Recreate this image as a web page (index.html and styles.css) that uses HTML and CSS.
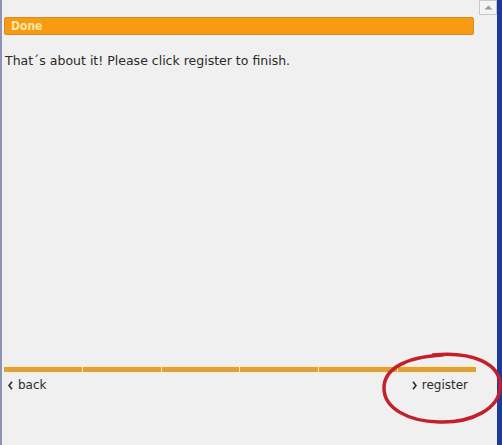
FILE: index.html
```html
<!DOCTYPE html>
<html>
<head>
<meta name="viewport" content="width=device-width, initial-scale=1">
<link rel="stylesheet" href="styles.css">
</head>
<body>
<div class="window">
  <div class="frame-left"></div>
  <div class="panel">
    <div class="step-title">Done</div>
    <p class="step-text">That´s about it! Please click register to finish.</p>
    <div class="progress">
      <span class="seg"></span>
      <span class="seg"></span>
      <span class="seg"></span>
      <span class="seg"></span>
      <span class="seg"></span>
      <span class="seg"></span>
    </div>
    <div class="nav">
      <a class="nav-link" href="#">
        <svg class="chev" width="5" height="9" viewBox="0 0 5 9"><path d="M4 0.8 L1 4.5 L4 8.2" fill="none" stroke="#2a2a2a" stroke-width="1.6"/></svg>back</a>
      <a class="nav-link" href="#">
        <svg class="chev" width="5" height="9" viewBox="0 0 5 9"><path d="M1 0.8 L4 4.5 L1 8.2" fill="none" stroke="#2a2a2a" stroke-width="1.6"/></svg>register</a>
    </div>
  </div>
  <div class="scrollbar">
    <div class="scroll-btn">
      <svg width="9" height="5" viewBox="0 0 9 5"><path d="M0.5 4.5 L4.5 0.5 L8.5 4.5 Z" fill="#9a9a9a"/></svg>
    </div>
  </div>
  <div class="frame-right"></div>
  <svg class="circle-mark" width="124" height="76" viewBox="0 0 124 76">
    <path d="M52 4 C92 0 119 13 119 34 C120 58 90 72 58 71 C26 70 3 57 3 37 C3 18 24 6 62 4" fill="none" stroke="#c4202c" stroke-width="3.5" stroke-linecap="round"/>
  </svg>
</div>
</body>
</html>
```

FILE: styles.css
```css
html, body {
  margin: 0;
  padding: 0;
  background: #f0f0f0;
}
.window {
  display: flex;
  height: 445px;
  position: relative;
  font-family: "DejaVu Sans", sans-serif;
  color: #2a2a2a;
}
.frame-left {
  width: 2px;
  background: #8d93b4;
}
.panel {
  flex: 1;
  display: flex;
  flex-direction: column;
  padding: 17px 0 52px 2px;
}
.step-title {
  margin-right: 5px;
  height: 16px;
  line-height: 16px;
  background: #f79c12;
  border: 1px solid #d98c1e;
  border-radius: 2px;
  padding-left: 6px;
  color: #fde6a6;
  font-weight: bold;
  font-size: 12px;
  font-family: "DejaVu Sans Condensed", "DejaVu Sans", sans-serif;
}
.step-text {
  margin: 18px 0 0 1px;
  font-size: 12.5px;
}
.progress {
  margin-top: auto;
  margin-right: 3px;
  height: 5px;
  display: flex;
  gap: 1px;
  background: #fde9a8;
  border-top: 1px solid #fdeeb8;
  border-bottom: 1px solid #fdeeb8;
}
.seg {
  flex: 1;
  background: #dfa03e;
}
.nav {
  display: flex;
  justify-content: space-between;
  padding: 5px 11px 0 4px;
  font-size: 12px;
  line-height: 15px;
}
.nav-link {
  display: flex;
  align-items: center;
  gap: 5px;
  color: #2a2a2a;
  text-decoration: none;
}
.scrollbar {
  width: 18px;
}
.scroll-btn {
  height: 13px;
  border: 1px solid #c8c8c8;
  background: #f4f4f4;
  display: flex;
  align-items: center;
  justify-content: center;
}
.frame-right {
  width: 5px;
  background: #1c3a9e;
}
.circle-mark {
  position: absolute;
  left: 381px;
  top: 351px;
}
```
